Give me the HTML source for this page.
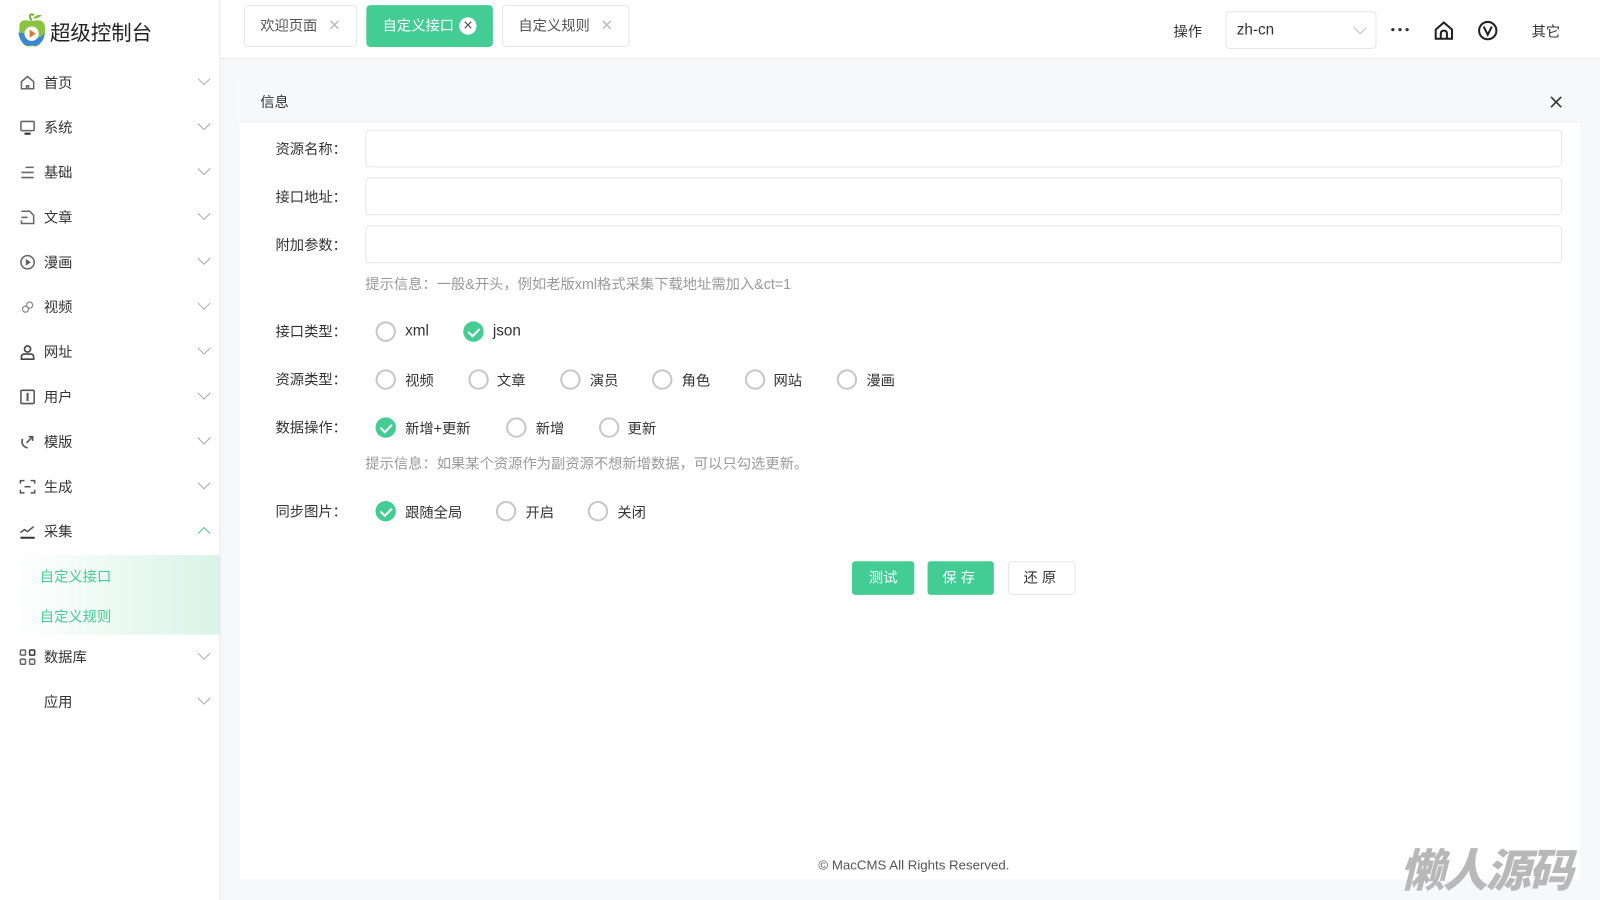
<!DOCTYPE html>
<html><head><meta charset="utf-8"><style>
*{box-sizing:border-box;margin:0;padding:0}
html,body{width:1600px;height:900px;overflow:hidden}
body{background:#f7f8fa;font-family:"Liberation Sans","Noto Sans CJK SC",sans-serif;color:#333;font-size:14px}
#wrap{position:absolute;left:0;top:0;width:1568px;height:882px;transform:scale(1.0204);transform-origin:0 0}
.abs{position:absolute}
#side{left:0;top:0;width:216px;height:882px;background:#fff;border-right:1px solid #e8e8ee}
.mi{position:absolute;left:0;width:215px;height:44px}
.mi svg.ic{position:absolute;left:19px;top:14px}
.mi .t{position:absolute;left:43px;top:12px;font-size:14px;color:#333}
.mi .ch{position:absolute;left:193px;top:17px}
#top{left:216px;top:0;width:1352px;height:58px;background:#fff;border-bottom:1px solid #e8e8ee}
.tab{position:absolute;top:5px;height:41px;border:1px solid #e4e6eb;border-radius:4px;background:#fff;font-size:14px;color:#555;line-height:39px;padding-left:15px}
.tab .x{position:absolute;right:15px;top:0;color:#bbb;font-size:15px}
#panel{left:235px;top:78px;width:1313px;height:784px;background:#fff}
.lab{position:absolute;left:270px;font-size:14px;color:#333}
.inp{position:absolute;left:358px;width:1173px;height:37px;border:1px solid #e4e6eb;border-radius:4px;background:#fff}
.r{position:absolute;width:20px;height:20px;border:2px solid #c8c8c8;border-radius:50%;background:#fff}
.r.on{border:none;background:#43cd94}
.r.on::after{content:"";position:absolute;left:7px;top:4px;width:5px;height:9px;border:solid #fff;border-width:0 2px 2px 0;transform:rotate(45deg)}
.rt{position:absolute;font-size:14px;color:#333}
.tip{position:absolute;left:358px;font-size:14px;color:#999}
.btn{position:absolute;top:550px;height:33px;border-radius:3px;font-size:14px;line-height:33px;text-align:center}
</style></head><body><div id="wrap">
<div id="side" class="abs">
 <svg class="abs" style="left:15px;top:12px" width="32" height="36" viewBox="0 0 32 36"><path d="M16 8 C12 2 16 1 18 3" stroke="#6bb52b" stroke-width="2" fill="none"/><path d="M17 6 q5 -5 9 -3 q-4 4 -9 3z" fill="#7dc23a"/><path d="M4 14 q0 -7 8 -6 q4 1 8 0 q8 -1 9 6 q1 8 -4 16 q-3 5 -9 3 q-6 2 -9 -3 q-4 -8 -3 -16z" fill="#8ac43f"/><path d="M3 20 q2 12 10 13 q3 -1 6 0 q9 -2 10 -13 q-6 8 -13 4 q-7 -4 -13 -4z" fill="#3b87d6"/><circle cx="16" cy="21" r="7" fill="#fff"/><path d="M14 17 l6 4 -6 4z" fill="#e0782a"/></svg>
 <div class="abs" style="left:49px;top:16px;font-size:20px;color:#222">超级控制台</div>
 <div class="mi" style="top:59px"><svg class="ic" width="16" height="16" viewBox="0 0 16 16" fill="none" stroke="#666" stroke-width="1.5"><path d="M2 7 L8 2 L14 7 V14 H2z"/><path d="M7 14 v-3 h2 v3"/></svg><span class="t">首页</span><svg class="ch" width="14" height="8"><path d="M1 1l6 6 6-6" stroke="#aaa" fill="none"/></svg></div>
 <div class="mi" style="top:103px"><svg class="ic" width="16" height="16" viewBox="0 0 16 16" fill="none" stroke="#666" stroke-width="1.5"><rect x="1.5" y="2" width="13" height="9" rx="1"/><path d="M5 14h6" stroke="#333" stroke-width="2"/></svg><span class="t">系统</span><svg class="ch" width="14" height="8"><path d="M1 1l6 6 6-6" stroke="#aaa" fill="none"/></svg></div>
 <div class="mi" style="top:147px"><svg class="ic" width="16" height="16" viewBox="0 0 16 16" fill="none" stroke="#666" stroke-width="1.5"><path d="M6 3h8M2 8h12M2 13h12"/></svg><span class="t">基础</span><svg class="ch" width="14" height="8"><path d="M1 1l6 6 6-6" stroke="#aaa" fill="none"/></svg></div>
 <div class="mi" style="top:191px"><svg class="ic" width="16" height="16" viewBox="0 0 16 16" fill="none" stroke="#666" stroke-width="1.5"><path d="M2 2h8l4 4v8H2v-3M2 8h6"/></svg><span class="t">文章</span><svg class="ch" width="14" height="8"><path d="M1 1l6 6 6-6" stroke="#aaa" fill="none"/></svg></div>
 <div class="mi" style="top:235px"><svg class="ic" width="16" height="16" viewBox="0 0 16 16" fill="none" stroke="#666" stroke-width="1.5"><circle cx="8" cy="8" r="6.5"/><path d="M7 6l3 2-3 2z" fill="#333"/></svg><span class="t">漫画</span><svg class="ch" width="14" height="8"><path d="M1 1l6 6 6-6" stroke="#aaa" fill="none"/></svg></div>
 <div class="mi" style="top:279px"><svg class="ic" width="16" height="16" viewBox="0 0 16 16" fill="none" stroke="#888" stroke-width="1.2"><circle cx="6" cy="10" r="3"/><circle cx="10" cy="6" r="3"/></svg><span class="t">视频</span><svg class="ch" width="14" height="8"><path d="M1 1l6 6 6-6" stroke="#aaa" fill="none"/></svg></div>
 <div class="mi" style="top:323px"><svg class="ic" width="16" height="16" viewBox="0 0 16 16" fill="none" stroke="#444" stroke-width="1.6"><circle cx="8" cy="5" r="3"/><path d="M2 15v-2q0-3 3-3h6q3 0 3 3v2z"/></svg><span class="t">网址</span><svg class="ch" width="14" height="8"><path d="M1 1l6 6 6-6" stroke="#aaa" fill="none"/></svg></div>
 <div class="mi" style="top:367px"><svg class="ic" width="16" height="16" viewBox="0 0 16 16" fill="none" stroke="#555" stroke-width="1.5"><rect x="1.5" y="1.5" width="13" height="13" rx="1"/><path d="M8 4v8" stroke-width="2"/></svg><span class="t">用户</span><svg class="ch" width="14" height="8"><path d="M1 1l6 6 6-6" stroke="#aaa" fill="none"/></svg></div>
 <div class="mi" style="top:411px"><svg class="ic" width="16" height="16" viewBox="0 0 16 16" fill="none" stroke="#555" stroke-width="1.6"><path d="M3 5q-2 7 5 9M7 9l6-6M9 3h4v4"/></svg><span class="t">模版</span><svg class="ch" width="14" height="8"><path d="M1 1l6 6 6-6" stroke="#aaa" fill="none"/></svg></div>
 <div class="mi" style="top:455px"><svg class="ic" width="16" height="16" viewBox="0 0 16 16" fill="none" stroke="#555" stroke-width="1.5"><path d="M1 5V2h4M11 2h4v3M15 11v3h-4M5 14H1v-3M5 8h6"/></svg><span class="t">生成</span><svg class="ch" width="14" height="8"><path d="M1 1l6 6 6-6" stroke="#aaa" fill="none"/></svg></div>
 <div class="mi" style="top:499px"><svg class="ic" width="16" height="16" viewBox="0 0 16 16" fill="none" stroke="#555" stroke-width="1.5"><path d="M1 9l4-3 3 2 6-5"/><path d="M1 14h14" stroke="#333" stroke-width="2"/></svg><span class="t">采集</span><svg class="ch" width="14" height="8"><path d="M1 7l6-6 6 6" stroke="#43cd94" fill="none"/></svg></div>
 <div class="abs" style="left:0;top:544px;width:215px;height:78px;background:linear-gradient(90deg,#fff 5%,#d9f4e7)"></div>
 <div class="abs" style="left:39px;top:555px;color:#43cd94">自定义接口</div>
 <div class="abs" style="left:39px;top:594px;color:#43cd94">自定义规则</div>
 <div class="mi" style="top:622px"><svg class="ic" width="16" height="16" viewBox="0 0 16 16" fill="none" stroke="#666" stroke-width="1.5"><rect x="1" y="1" width="5" height="5" rx="1"/><rect x="10" y="1" width="5" height="5" rx="1" stroke="#333"/><rect x="1" y="10" width="5" height="5" rx="1"/><rect x="10" y="10" width="5" height="5" rx="1"/></svg><span class="t">数据库</span><svg class="ch" width="14" height="8"><path d="M1 1l6 6 6-6" stroke="#aaa" fill="none"/></svg></div>
 <div class="mi" style="top:666px"><span class="t">应用</span><svg class="ch" width="14" height="8"><path d="M1 1l6 6 6-6" stroke="#aaa" fill="none"/></svg></div>
</div>
<div id="top" class="abs">
 <div class="tab" style="left:23px;width:111px">欢迎页面<span class="x">✕</span></div>
 <div class="tab" style="left:143px;width:124px;background:#43cd94;border-color:#43cd94;color:#fff">自定义接口<span style="position:absolute;right:15px;top:11px;width:17px;height:17px;border-radius:50%;background:#fff;color:#555;font-size:12px;line-height:17px;text-align:center">✕</span></div>
 <div class="tab" style="left:276px;width:125px">自定义规则<span class="x">✕</span></div>
 <div class="abs" style="left:934px;top:21px;font-size:14px">操作</div>
 <div class="abs" style="left:985px;top:11px;width:148px;height:37px;border:1px solid #e4e6eb;border-radius:4px;font-size:15px;line-height:36px;padding-left:10px">zh-cn<svg style="position:absolute;right:8px;top:14px" width="14" height="8"><path d="M1 1l6 6 6-6" stroke="#bbb" fill="none"/></svg></div>
 <svg class="abs" style="left:1147px;top:27px" width="18" height="4"><circle cx="2" cy="2" r="1.6" fill="#333"/><circle cx="9" cy="2" r="1.6" fill="#333"/><circle cx="16" cy="2" r="1.6" fill="#333"/></svg>
 <svg class="abs" style="left:1189px;top:20px" width="20" height="20" viewBox="0 0 20 20" fill="none" stroke="#222" stroke-width="2"><path d="M2 9 L10 2 L18 9 V18 H2z"/><path d="M7 18v-5q0-3 3-3t3 3v5"/></svg>
 <svg class="abs" style="left:1232px;top:20px" width="20" height="20" viewBox="0 0 20 20" fill="none" stroke="#222" stroke-width="2"><circle cx="10" cy="10" r="8.5"/><path d="M6 6l4 8 4-8"/></svg>
 <div class="abs" style="left:1285px;top:21px;font-size:14px">其它</div>
</div>
<div id="panel" class="abs">
 <div class="abs" style="left:0;top:0;width:1313px;height:42px;background:#f7f8fa;border-bottom:1px solid #eee"></div>
 <div class="abs" style="left:20px;top:12px">信息</div>
 <svg class="abs" style="left:1284px;top:16px" width="12" height="12"><path d="M1 1l10 10M11 1L1 11" stroke="#333" stroke-width="1.6"/></svg>
</div>
<div class="lab" style="top:136px">资源名称：</div><div class="inp" style="top:127px"></div>
<div class="lab" style="top:183px">接口地址：</div><div class="inp" style="top:174px"></div>
<div class="lab" style="top:230px">附加参数：</div><div class="inp" style="top:221px"></div>
<div class="tip" style="top:268px">提示信息：一般&amp;开头，例如老版xml格式采集下载地址需加入&amp;ct=1</div>
<div class="lab" style="top:315px">接口类型：</div>
<div class="r" style="left:368px;top:315px"></div><div class="rt" style="left:397px;top:316px;font-size:15px">xml</div>
<div class="r on" style="left:454px;top:315px"></div><div class="rt" style="left:483px;top:316px;font-size:15px">json</div>
<div class="lab" style="top:362px">资源类型：</div>
<div class="r" style="left:368px;top:362px"></div><div class="rt" style="left:397px;top:363px">视频</div>
<div class="r" style="left:459px;top:362px"></div><div class="rt" style="left:487px;top:363px">文章</div>
<div class="r" style="left:549px;top:362px"></div><div class="rt" style="left:578px;top:363px">演员</div>
<div class="r" style="left:639px;top:362px"></div><div class="rt" style="left:668px;top:363px">角色</div>
<div class="r" style="left:730px;top:362px"></div><div class="rt" style="left:758px;top:363px">网站</div>
<div class="r" style="left:820px;top:362px"></div><div class="rt" style="left:849px;top:363px">漫画</div>
<div class="lab" style="top:409px">数据操作：</div>
<div class="r on" style="left:368px;top:409px"></div><div class="rt" style="left:397px;top:410px">新增+更新</div>
<div class="r" style="left:496px;top:409px"></div><div class="rt" style="left:525px;top:410px">新增</div>
<div class="r" style="left:587px;top:409px"></div><div class="rt" style="left:615px;top:410px">更新</div>
<div class="tip" style="top:444px">提示信息：如果某个资源作为副资源不想新增数据，可以只勾选更新。</div>
<div class="lab" style="top:491px">同步图片：</div>
<div class="r on" style="left:368px;top:491px"></div><div class="rt" style="left:397px;top:492px">跟随全局</div>
<div class="r" style="left:486px;top:491px"></div><div class="rt" style="left:515px;top:492px">开启</div>
<div class="r" style="left:576px;top:491px"></div><div class="rt" style="left:605px;top:492px">关闭</div>
<div class="btn" style="left:835px;width:61px;background:#43cd94;color:#fff">测试</div>
<div class="btn" style="left:909px;width:65px;background:#43cd94;color:#fff;letter-spacing:4px">保存</div>
<div class="btn" style="left:988px;width:66px;background:#fff;border:1px solid #e4e6eb;color:#333;letter-spacing:4px;line-height:31px">还原</div>
<div class="abs" style="left:802px;top:840px;font-size:13px;color:#555">© MacCMS All Rights Reserved.</div>
<div class="abs" style="left:1372px;top:818px;font-size:44px;font-weight:900;font-style:italic;color:#b8b8b8;letter-spacing:-2px">懒人源码</div>
</div></body></html>
